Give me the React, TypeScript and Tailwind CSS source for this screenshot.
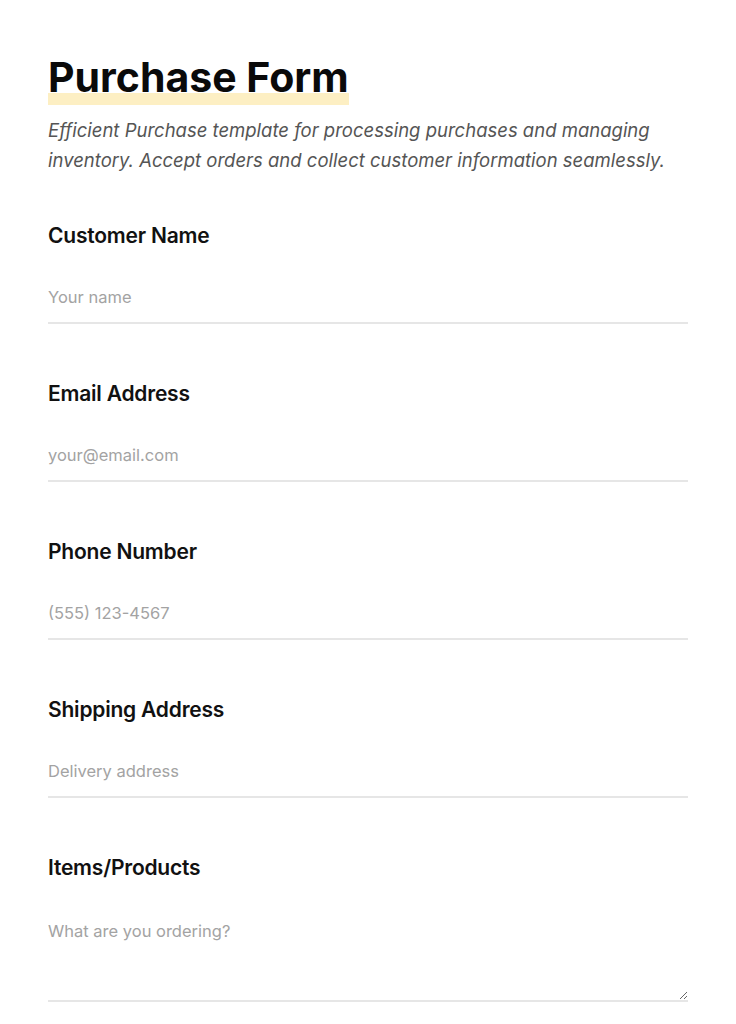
import React from 'react';

const fields = [
  { label: 'Customer Name', placeholder: 'Your name', type: 'text' },
  { label: 'Email Address', placeholder: 'your@email.com', type: 'email' },
  { label: 'Phone Number', placeholder: '(555) 123-4567', type: 'tel' },
  { label: 'Shipping Address', placeholder: 'Delivery address', type: 'text' },
];

export default function App() {
  return (
    <div className="min-h-screen bg-white px-12 pt-[53px] font-['Inter',sans-serif] text-[#111]">
      <div className="inline-flex flex-col">
        <h1 className="relative z-10 text-[41px] leading-[48px] font-bold tracking-[0em] text-[#0a0a0a]">Purchase Form</h1>
        <div className="-mt-[8px] h-[12px] bg-[#fdefc3]" />
      </div>
      <p className="mt-[10px] text-[18.5px] leading-[30px] italic text-[#555]">
        Efficient Purchase template for processing purchases and managing inventory. Accept orders and collect customer information seamlessly.
      </p>

      <form className="mt-[47px] flex flex-col gap-[56px]">
        {fields.map((f) => (
          <label key={f.label} className="flex flex-col gap-[22px]">
            <span className="text-[21px] leading-[28px] font-semibold tracking-[-0.01em]">{f.label}</span>
            <input
              type={f.type}
              placeholder={f.placeholder}
              className="h-[52px] w-full border-b-2 border-[#e6e6e6] bg-transparent text-[16.5px] outline-none placeholder:text-[#a3a3a3]"
            />
          </label>
        ))}
        <label className="flex flex-col gap-[22px]">
          <span className="text-[21px] leading-[28px] font-semibold tracking-[-0.01em]">Items/Products</span>
          <textarea
            placeholder="What are you ordering?"
            className="h-[98px] w-full border-b-2 border-[#e6e6e6] bg-transparent pt-[15px] text-[16.5px] leading-6 outline-none placeholder:text-[#a3a3a3]"
          />
        </label>
      </form>
    </div>
  );
}
